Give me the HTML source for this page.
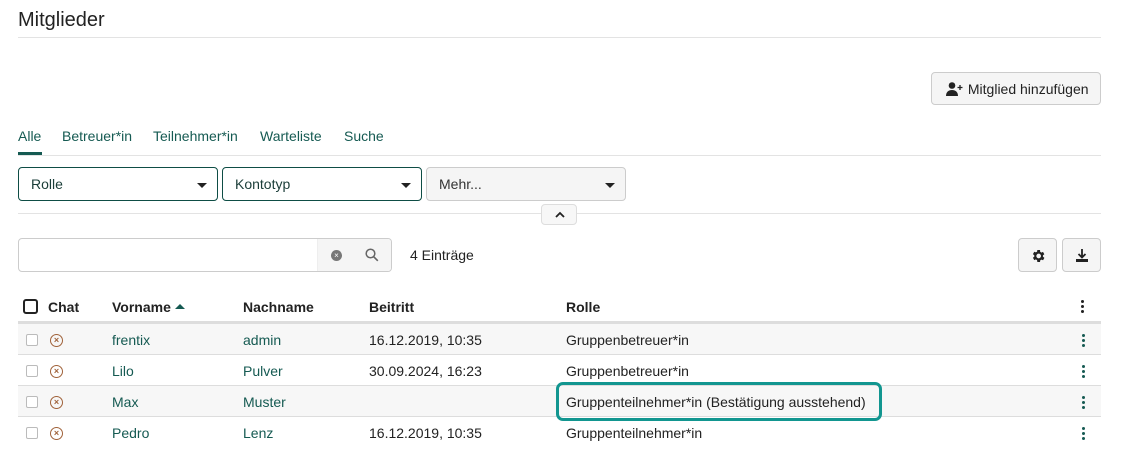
<!DOCTYPE html><html><head><meta charset="utf-8"><style>
*{box-sizing:border-box;margin:0;padding:0}
body{width:1122px;height:455px;background:#fff;font-family:"Liberation Sans",sans-serif;font-size:14px;color:#222;position:relative;overflow:hidden}
.a{position:absolute}
.hl{position:absolute;height:1px;background:#e3e3e3}
.tab{position:absolute;top:128px;color:#155a52;font-size:14px}
.sel{position:absolute;top:167px;height:34px;border:1px solid #0e4d45;border-radius:4px;padding:8px 12px;color:#1a3d38;font-size:14px}
.caret{position:absolute;right:10px;top:15px;width:0;height:0;border-left:5px solid transparent;border-right:5px solid transparent;border-top:5px solid #222}
.btn{position:absolute;background:#f5f5f5;border:1px solid #ccc;border-radius:4px}
.th{position:absolute;top:299px;font-weight:bold;font-size:14px;color:#222}
.row{position:absolute;left:18px;width:1083px;height:31px;border-bottom:1px solid #ddd}
.c{position:absolute;top:8px;font-size:14px}
.g{color:#155a52}
.cb{position:absolute;left:8px;top:10px;width:12px;height:12px;border:1px solid #bbb;border-radius:2px;background:#fff}
.x{position:absolute;left:32px;top:10px;width:13px;height:13px;border:1.5px solid #a0623a;border-radius:50%;color:#a0623a;font-size:9px;line-height:10px;text-align:center;font-weight:bold}
.dots{position:absolute;right:16px;top:10px;width:3px}
.dots i{display:block;width:3px;height:3px;border-radius:50%;background:#155a52;margin-bottom:2px}
</style></head><body>
<div class="a" style="left:18px;top:9px;font-size:20px;color:#222">Mitglieder</div>
<div class="hl" style="left:18px;top:37px;width:1083px"></div>
<div class="btn" style="left:931px;top:72px;width:170px;height:33px;padding:8px 0 0 14px;font-size:14px">
<svg width="18" height="14" viewBox="0 0 18 14" style="vertical-align:-2px"><circle cx="6" cy="3.5" r="3.3" fill="#222"/><path d="M0 14c0-4 2.5-6 6-6s6 2 6 6z" fill="#222"/><path d="M14 3v5M11.5 5.5h5" stroke="#222" stroke-width="1.3"/></svg> Mitglied hinzufügen</div>
<div class="tab" style="left:18px;color:#155a52">Alle</div>
<div class="a" style="left:18px;top:152px;width:24px;height:3px;background:#155a52"></div>
<div class="tab" style="left:62px">Betreuer*in</div>
<div class="tab" style="left:153px">Teilnehmer*in</div>
<div class="tab" style="left:260px">Warteliste</div>
<div class="tab" style="left:344px">Suche</div>
<div class="hl" style="left:18px;top:155px;width:1083px"></div>
<div class="sel" style="left:18px;width:200px">Rolle<span class="caret"></span></div>
<div class="sel" style="left:222px;width:200px">Kontotyp<span class="caret"></span></div>
<div class="sel" style="left:426px;width:200px;border-color:#ccc;background:#f5f5f5;color:#333">Mehr...<span class="caret"></span></div>
<div class="hl" style="left:18px;top:213px;width:1083px"></div>
<div class="btn" style="left:541px;top:204px;width:36px;height:21px;background:#f7f7f7;border-color:#ddd"><svg width="12" height="8" viewBox="0 0 12 8" style="position:absolute;left:12px;top:6px"><path d="M2 6l4-4 4 4" stroke="#222" stroke-width="1.8" fill="none"/></svg></div>
<div class="a" style="left:18px;top:238px;width:374px;height:34px;border:1px solid #ccc;border-radius:4px;overflow:hidden">
<div class="a" style="left:298px;top:0;width:76px;height:34px;background:#f5f5f5;border-left:1px solid #eee"></div>
<div class="a" style="left:312px;top:11px;width:11px;height:11px;border-radius:50%;background:#777;color:#fff;font-size:8px;line-height:11px;text-align:center">×</div>
<svg class="a" style="left:346px;top:9px" width="14" height="14" viewBox="0 0 14 14"><circle cx="5.5" cy="5.5" r="4.3" stroke="#666" stroke-width="1.5" fill="none"/><path d="M8.8 8.8l4 4" stroke="#666" stroke-width="1.6"/></svg>
</div>
<div class="a" style="left:410px;top:247px">4 Einträge</div>
<div class="btn" style="left:1018px;top:238px;width:39px;height:34px"><svg class="a" style="left:11px;top:9px" width="16" height="16" viewBox="0 0 24 24"><path fill="#222" d="M19.4 13a7.5 7.5 0 000-2l2.1-1.6-2-3.5-2.5 1a7 7 0 00-1.7-1L15 3h-4l-.4 2.6a7 7 0 00-1.7 1l-2.5-1-2 3.5L6.5 11a7.5 7.5 0 000 2l-2.1 1.6 2 3.5 2.5-1a7 7 0 001.7 1L11 21h4l.4-2.6a7 7 0 001.7-1l2.5 1 2-3.5zM13 15.5a3.5 3.5 0 110-7 3.5 3.5 0 010 7z"/></svg></div>
<div class="btn" style="left:1062px;top:238px;width:39px;height:34px"><svg class="a" style="left:12px;top:9px" width="14" height="15" viewBox="0 0 14 15"><path d="M7 1v8M3.5 6l3.5 3.5L10.5 6" stroke="#222" stroke-width="1.8" fill="none"/><path d="M1 11h12v3H1z" fill="#222"/></svg></div>
<div class="a" style="left:23px;top:299px;width:15px;height:15px;border:2px solid #222;border-radius:3px"></div>
<div class="th" style="left:48px">Chat</div>
<div class="th" style="left:112px">Vorname <span style="display:inline-block;width:0;height:0;border-left:5px solid transparent;border-right:5px solid transparent;border-bottom:5px solid #155a52;vertical-align:3px"></span></div>
<div class="th" style="left:243px">Nachname</div>
<div class="th" style="left:369px">Beitritt</div>
<div class="th" style="left:566px">Rolle</div>
<div class="dots" style="position:absolute;left:1081px;top:300px;"><i style="background:#222"></i><i style="background:#222"></i><i style="background:#222"></i></div>
<div class="a" style="left:18px;top:321px;width:1083px;height:3px;background:#ddd"></div>
<div class="row" style="top:324px;background:#f7f7f7"><span class="cb"></span><span class="x">×</span><span class="c g" style="left:94px">frentix</span><span class="c g" style="left:225px">admin</span><span class="c" style="left:351px">16.12.2019, 10:35</span><span class="c" style="left:548px">Gruppenbetreuer*in</span><span class="dots"><i></i><i></i><i></i></span></div>
<div class="row" style="top:355px"><span class="cb"></span><span class="x">×</span><span class="c g" style="left:94px">Lilo</span><span class="c g" style="left:225px">Pulver</span><span class="c" style="left:351px">30.09.2024, 16:23</span><span class="c" style="left:548px">Gruppenbetreuer*in</span><span class="dots"><i></i><i></i><i></i></span></div>
<div class="row" style="top:386px;background:#f7f7f7"><span class="cb"></span><span class="x">×</span><span class="c g" style="left:94px">Max</span><span class="c g" style="left:225px">Muster</span><span class="c" style="left:548px">Gruppenteilnehmer*in (Bestätigung ausstehend)</span><span class="dots"><i></i><i></i><i></i></span></div>
<div class="row" style="top:417px;border-bottom:none"><span class="cb"></span><span class="x">×</span><span class="c g" style="left:94px">Pedro</span><span class="c g" style="left:225px">Lenz</span><span class="c" style="left:351px">16.12.2019, 10:35</span><span class="c" style="left:548px">Gruppenteilnehmer*in</span><span class="dots"><i></i><i></i><i></i></span></div>
<div class="a" style="left:556px;top:382px;width:326px;height:39px;border:3px solid #129690;border-radius:7px"></div>
</body></html>
